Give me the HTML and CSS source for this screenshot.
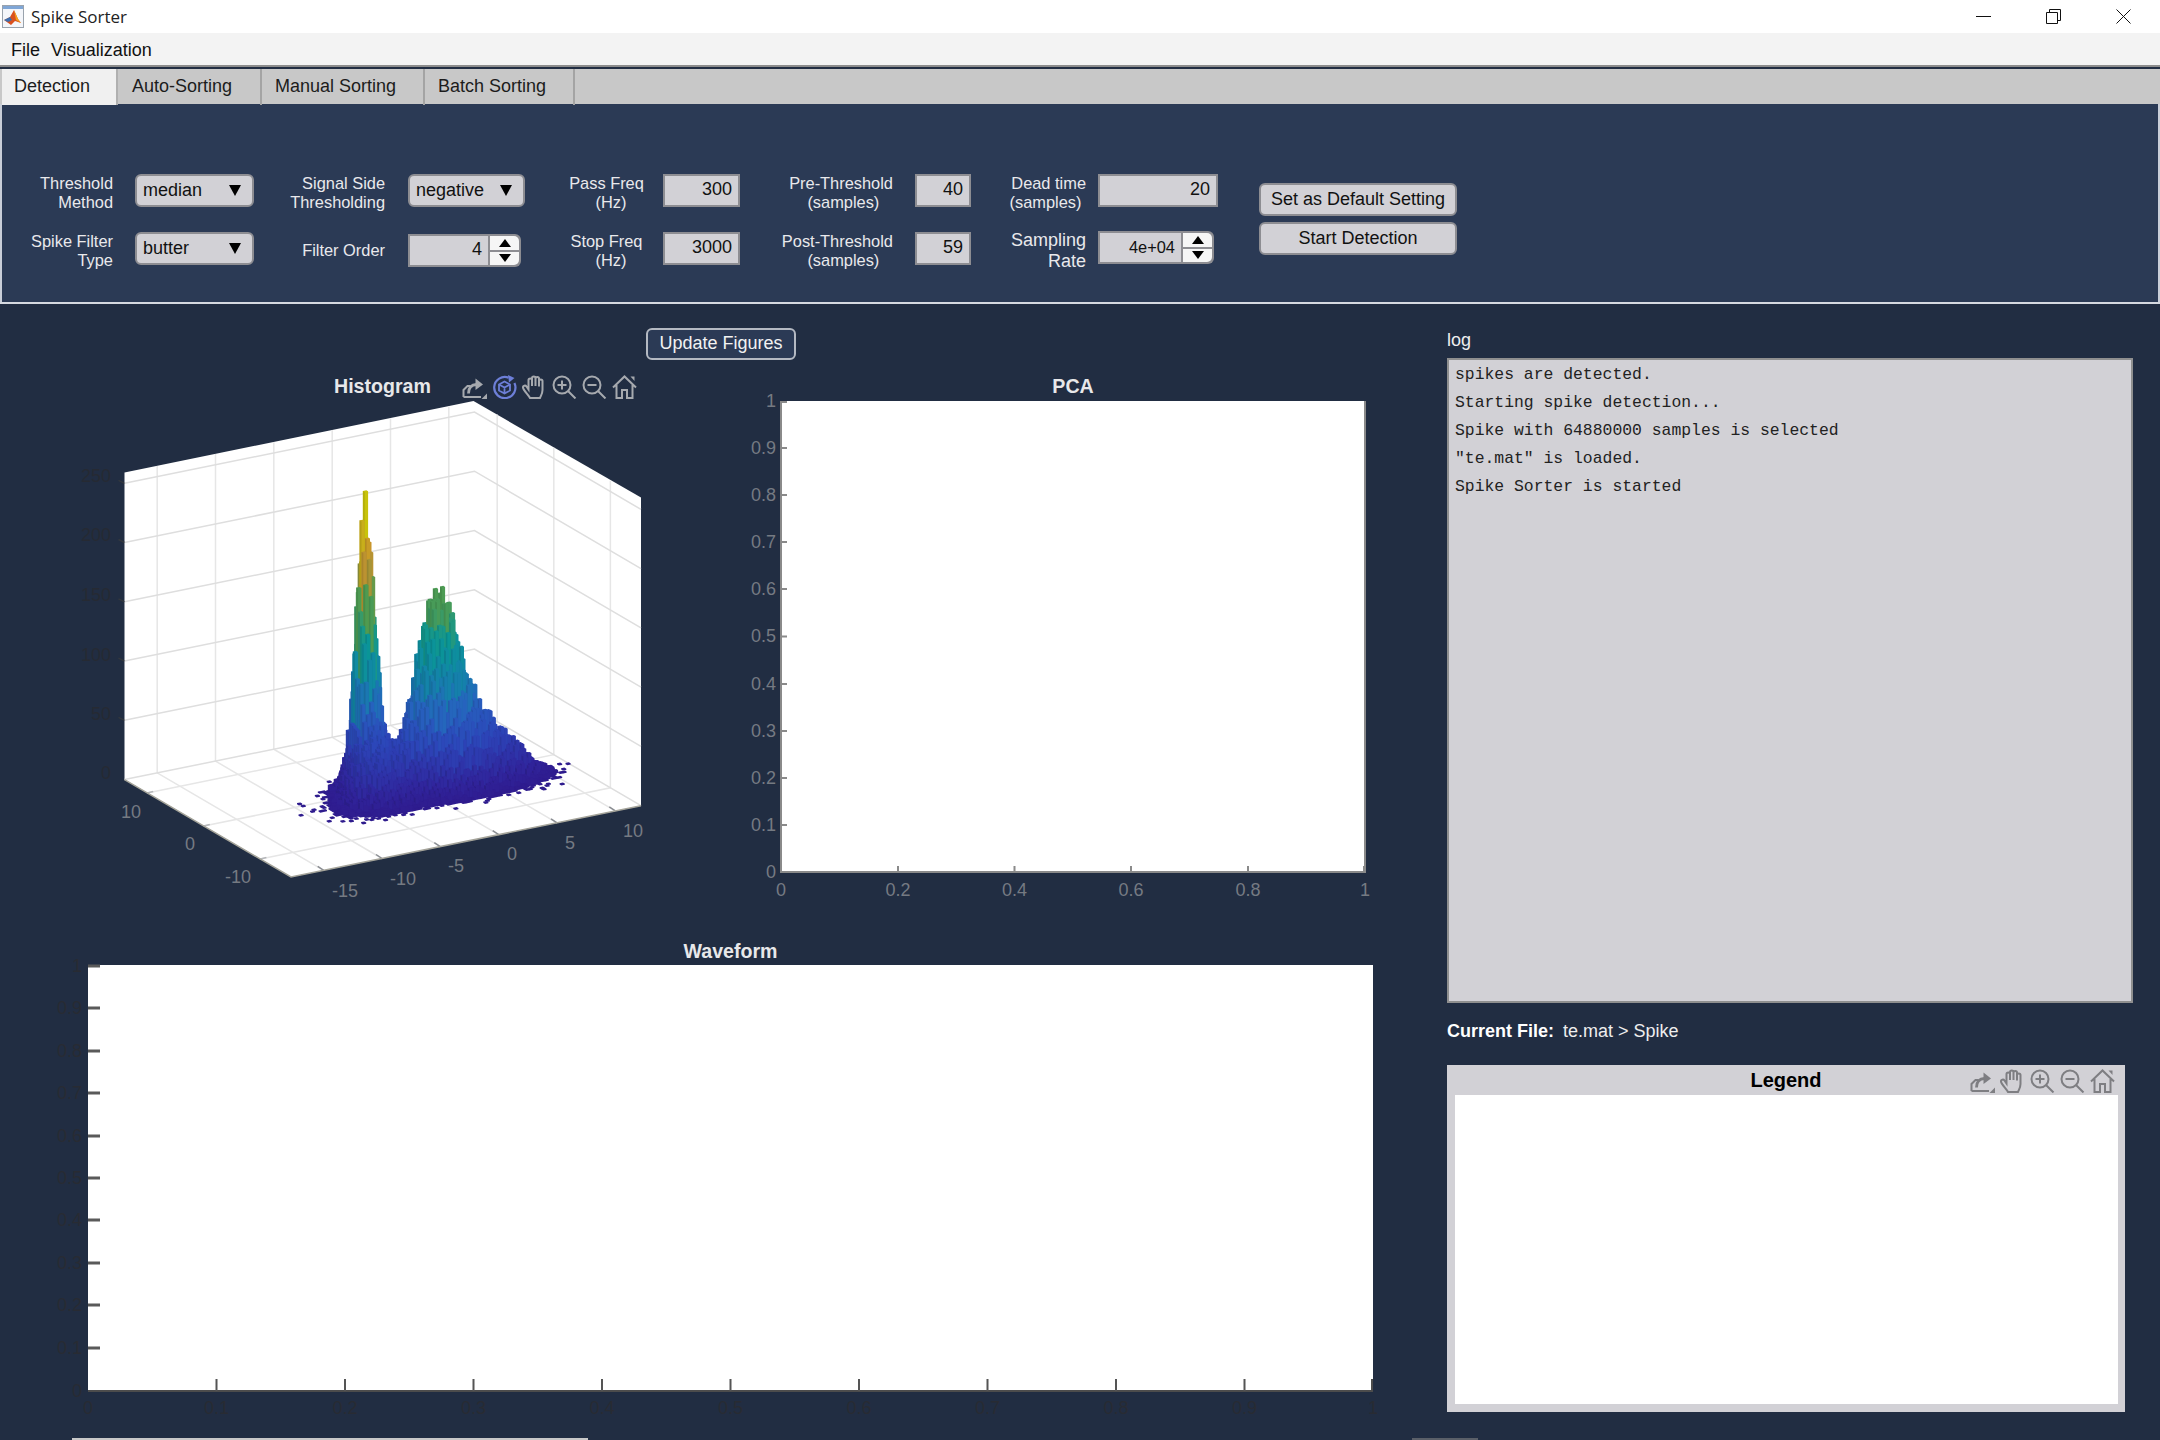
FILE: index.html
```html
<!DOCTYPE html>
<html lang="en">
<head>
    <meta charset="UTF-8">
    <title>Spike Sorter</title>
    <link rel="stylesheet" href="styles.css">
</head>
<body>

<svg class="icon-defs" width="0" height="0">
    <symbol id="ic-export" viewBox="0 0 25 24">
        <path d="M1.500 22V15L5.500 11H8.500M1.500 22H19" fill="none"/>
        <path d="M6.500 18.500C6.500 12.500 9.500 9.500 14.500 9.500" fill="none" stroke-width="2.800"/>
        <path d="M13.500 3.500L21 9.500L13.500 15Z" class="solid"/>
        <path d="M25 18.500V24H19.500Z" class="solid"/>
    </symbol>
    <symbol id="ic-rotate" viewBox="0 0 25 24">
        <path d="M16.500 2.600A10.600 10.600 0 1 0 22.400 8" fill="none" stroke-width="2.200"/>
        <path d="M16 0L22.500 3L17 7.500Z" class="solid"/>
        <path d="M12.500 6.500L18 9.500V15.500L12.500 18.500L7 15.500V9.500ZM7 9.500L12.500 12.500L18 9.500M12.500 12.500V18.500" fill="none" stroke-width="1.800"/>
    </symbol>
    <symbol id="ic-hand" viewBox="0 0 25 24">
        <path d="M8 23C6 19.500 1.500 15.500 1 12.500C0.800 10.500 3.500 10 4.500 11.500L6.500 14.500V5C6.500 3 10 3 10 5V11V3C10 1 13.500 1 13.500 3V11V3.500C13.500 1.500 17 1.500 17 3.500V11.500V6C17 4 20.500 4 20.500 6V15C20.500 18.500 19 20.500 18 23Z" fill="none"/>
    </symbol>
    <symbol id="ic-zoom-in" viewBox="0 0 25 24">
        <circle cx="10" cy="10" r="8.500" fill="none"/>
        <path d="M16 16L23.500 23.500M10 5.500V14.500M5.500 10H14.500" fill="none"/>
    </symbol>
    <symbol id="ic-zoom-out" viewBox="0 0 25 24">
        <circle cx="10" cy="10" r="8.500" fill="none"/>
        <path d="M16 16L23.500 23.500M5.500 10H14.500" fill="none"/>
    </symbol>
    <symbol id="ic-home" viewBox="0 0 25 24">
        <path d="M1 12.500L12.500 1.500L24 12.500M4.500 10V23H10V15H15V23H20.500V10" fill="none"/>
        <path d="M18.500 1.500H22.500V6Z" class="solid"/>
    </symbol>
</svg>

<!-- Title bar -->
<div class="titlebar">
    <svg class="app-icon" viewBox="0 0 22 23">
        <rect x="0.500" y="0.500" width="21" height="22" fill="#f4f6fa" stroke="#9aa3ad"/>
        <rect x="1" y="1" width="20" height="3" fill="#7fa6d6"/>
        <path d="M2 15L8 12L12 5L16 14L19 18L13 16L9 20Z" fill="#d9501e"/>
        <path d="M2 15L8 12L10 15L6 17Z" fill="#3c6fb0"/>
        <path d="M12 5L16 14L19 18L14 15Z" fill="#f4a01c"/>
    </svg>
    <span class="app-title">Spike Sorter</span>
    <div class="win-buttons">
        <svg class="win-btn" viewBox="0 0 15 15"><path d="M0 7.500H15"/></svg>
        <svg class="win-btn" viewBox="0 0 15 15"><path d="M0.500 3.500H11.500V14.500H0.500ZM3.500 3.500V0.500H14.500V11.500H11.500"/></svg>
        <svg class="win-btn" viewBox="0 0 15 15"><path d="M0.500 0.500L14.500 14.500M14.500 0.500L0.500 14.500"/></svg>
    </div>
</div>

<!-- Menu -->
<div class="menubar">
    <span>File</span>
    <span>Visualization</span>
</div>

<!-- Tabs -->
<div class="tabbar">
    <div class="tab tab-active tab-first">Detection</div>
    <div class="tab tab-auto">Auto-Sorting</div>
    <div class="tab tab-manual">Manual Sorting</div>
    <div class="tab tab-batch">Batch Sorting</div>
</div>

<!-- Detection settings -->
<div class="settings">
    <div class="lbl lbl-1">Threshold<br>Method</div>
    <div class="dropdown">median</div>
    <div class="lbl lbl-2">Signal Side<br>Thresholding</div>
    <div class="dropdown">negative</div>
    <div class="lbl lbl-3">Pass Freq<br>&nbsp;&nbsp;(Hz)</div>
    <div class="edit">300</div>
    <div class="lbl lbl-4">Pre-Threshold<br>(samples)&nbsp;&nbsp;&nbsp;</div>
    <div class="edit">40</div>
    <div class="lbl lbl-5">Dead time<br>(samples)&nbsp;</div>
    <div class="edit">20</div>

    <div class="lbl lbl-1">Spike Filter<br>Type</div>
    <div class="dropdown">butter</div>
    <div class="lbl lbl-2">Filter Order</div>
    <div class="spinner spinner-order">
        <div class="edit spin-value">4</div>
        <div class="spin-btns"><span class="spin-up"></span><span class="spin-down"></span></div>
    </div>
    <div class="lbl lbl-3">Stop Freq<br>&nbsp;&nbsp;(Hz)</div>
    <div class="edit">3000</div>
    <div class="lbl lbl-4">Post-Threshold<br>(samples)&nbsp;&nbsp;&nbsp;</div>
    <div class="edit">59</div>
    <div class="lbl lbl-5 lbl-big">Sampling<br>Rate</div>
    <div class="spinner spinner-rate">
        <div class="edit spin-value spin-small">4e+04</div>
        <div class="spin-btns"><span class="spin-up"></span><span class="spin-down"></span></div>
    </div>

    <div class="action-btns">
        <div class="btn">Set as Default Setting</div>
        <div class="btn">Start Detection</div>
    </div>
</div>

<div class="main">
    <div class="plots">
        <div class="btn-update">Update Figures</div>

        <div class="plots-top">
            <!-- Histogram -->
            <div class="hist">
                <div class="hist-head">
                    <span class="plot-title">Histogram</span>
                    <div class="toolbar toolbar-dark">
                        <svg class="tb-icon"><use href="#ic-export"/></svg>
                        <svg class="tb-icon tb-active"><use href="#ic-rotate"/></svg>
                        <svg class="tb-icon"><use href="#ic-hand"/></svg>
                        <svg class="tb-icon"><use href="#ic-zoom-in"/></svg>
                        <svg class="tb-icon"><use href="#ic-zoom-out"/></svg>
                        <svg class="tb-icon"><use href="#ic-home"/></svg>
                    </div>
                </div>
                <svg class="hist-svg" viewBox="0 401 700 519">
                    <polygon points="124.500,472.500 473.500,401 641,497.500 641,805.700 291,877 124.500,779.600" fill="#fff"/>
                    <g id="hist-grid"></g>
                    <g id="hist-bars"></g>
                    <g class="ax-dark" text-anchor="end">
                        <text x="111" y="482">250</text>
                        <text x="111" y="541">200</text>
                        <text x="111" y="601">150</text>
                        <text x="111" y="661">100</text>
                        <text x="111" y="720">50</text>
                        <text x="111" y="779">0</text>
                    </g>
                    <g class="ax-gray" text-anchor="middle">
                        <text x="345" y="897">-15</text>
                        <text x="403" y="885">-10</text>
                        <text x="456" y="872">-5</text>
                        <text x="512" y="860">0</text>
                        <text x="570" y="849">5</text>
                        <text x="633" y="837">10</text>
                        <text x="238" y="883">-10</text>
                        <text x="190" y="850">0</text>
                        <text x="131" y="818">10</text>
                    </g>
                </svg>
            </div>

            <!-- PCA -->
            <div class="pca">
                <div class="pca-head"><span class="plot-title">PCA</span></div>
                <svg class="pca-svg" viewBox="700 401 700 519">
                    <rect x="781" y="401" width="584" height="471" fill="#fff"/>
                    <path class="pca-axis" d="M781 401V872H1365V401"/>
                    <path class="pca-tick" d="M781 402h6M781 448h6M781 495h6M781 542h6M781 589h6M781 636.500h6M781 684h6M781 731h6M781 778h6M781 825h6M898 872v-6M1014.500 872v-6M1131 872v-6M1248 872v-6M1364 872v-6"/>
                    <g class="ax-gray" text-anchor="end">
                        <text x="776" y="407">1</text>
                        <text x="776" y="454">0.9</text>
                        <text x="776" y="501">0.8</text>
                        <text x="776" y="548">0.7</text>
                        <text x="776" y="595">0.6</text>
                        <text x="776" y="642">0.5</text>
                        <text x="776" y="690">0.4</text>
                        <text x="776" y="737">0.3</text>
                        <text x="776" y="784">0.2</text>
                        <text x="776" y="831">0.1</text>
                        <text x="776" y="878">0</text>
                    </g>
                    <g class="ax-gray" text-anchor="middle">
                        <text x="781" y="896">0</text>
                        <text x="898" y="896">0.2</text>
                        <text x="1014.500" y="896">0.4</text>
                        <text x="1131" y="896">0.6</text>
                        <text x="1248" y="896">0.8</text>
                        <text x="1365" y="896">1</text>
                    </g>
                </svg>
            </div>
        </div>

        <!-- Waveform -->
        <div class="wave">
            <div class="wave-head"><span class="plot-title">Waveform</span></div>
            <svg class="wave-svg" viewBox="0 966 1447 460">
                <rect x="88" y="966" width="1285" height="426" fill="#fff"/>
                <path class="wave-axis" d="M88 1392H1372V1380"/>
                <path class="wave-tick-y" d="M88 967h12M88 1009h12M88 1052h12M88 1094h12M88 1137h12M88 1179h12M88 1221h12M88 1264h12M88 1306h12M88 1349h12"/>
                <path class="wave-tick-x" d="M216.500 1392v-12M345 1392v-12M473.500 1392v-12M602 1392v-12M730.500 1392v-12M859 1392v-12M987.500 1392v-12M1116 1392v-12M1244.500 1392v-12"/>
                <g class="ax-hidden" text-anchor="end">
                    <text x="82" y="973">1</text>
                    <text x="82" y="1015">0.9</text>
                    <text x="82" y="1058">0.8</text>
                    <text x="82" y="1100">0.7</text>
                    <text x="82" y="1143">0.6</text>
                    <text x="82" y="1185">0.5</text>
                    <text x="82" y="1227">0.4</text>
                    <text x="82" y="1270">0.3</text>
                    <text x="82" y="1312">0.2</text>
                    <text x="82" y="1355">0.1</text>
                    <text x="82" y="1398">0</text>
                </g>
                <g class="ax-hidden" text-anchor="middle">
                    <text x="88" y="1415">0</text>
                    <text x="216.500" y="1415">0.1</text>
                    <text x="345" y="1415">0.2</text>
                    <text x="473.500" y="1415">0.3</text>
                    <text x="602" y="1415">0.4</text>
                    <text x="730.500" y="1415">0.5</text>
                    <text x="859" y="1415">0.6</text>
                    <text x="987.500" y="1415">0.7</text>
                    <text x="1116" y="1415">0.8</text>
                    <text x="1244.500" y="1415">0.9</text>
                    <text x="1373" y="1415">1</text>
                </g>
            </svg>
        </div>
    </div>

    <div class="side">
        <div class="log-label">log</div>
        <div class="log-box">
            <div>spikes are detected.</div>
            <div>Starting spike detection...</div>
            <div>Spike with 64880000 samples is selected</div>
            <div>"te.mat" is loaded.</div>
            <div>Spike Sorter is started</div>
        </div>
        <div class="current-file"><b>Current File:</b><span>te.mat &gt; Spike</span></div>
        <div class="legend">
            <div class="legend-head">Legend</div>
            <div class="toolbar toolbar-legend">
                <svg class="tb-icon"><use href="#ic-export"/></svg>
                <svg class="tb-icon"><use href="#ic-hand"/></svg>
                <svg class="tb-icon"><use href="#ic-zoom-in"/></svg>
                <svg class="tb-icon"><use href="#ic-zoom-out"/></svg>
                <svg class="tb-icon"><use href="#ic-home"/></svg>
            </div>
            <div class="legend-body"></div>
        </div>
    </div>
</div>

<div class="scroll-thumb scroll-left"></div>
<div class="scroll-thumb scroll-right"></div>

<script src="hist.js"></script>
</body>
</html>
```

FILE: styles.css
```css
body {
    margin: 0;
    height: 1440px;
    overflow: hidden;
    position: relative;
    background-color: #212d42;
    font-family: "Liberation Sans", Arial, sans-serif;
    font-size: 18px;
}

.icon-defs {
    position: absolute;
}

.solid {
    fill: currentColor;
    stroke: none;
}

/* Title bar */
.titlebar {
    height: 33px;
    background-color: #fff;
    display: flex;
    align-items: center;
}
.app-icon {
    width: 22px;
    height: 23px;
    margin-left: 2px;
}
.app-title {
    margin-left: 7px;
    font-family: "Open Sans", sans-serif;
    font-size: 17px;
    color: #222;
}
.win-buttons {
    margin-left: auto;
    display: flex;
    gap: 55px;
    padding-right: 29px;
}
.win-btn {
    width: 15px;
    height: 15px;
    fill: none;
    stroke: #111;
    stroke-width: 1;
}

/* Menu */
.menubar {
    box-sizing: border-box;
    height: 32px;
    padding: 2px 0 0 11px;
    background-color: #f3f3f3;
    display: flex;
    align-items: center;
    gap: 11px;
    color: #111;
}

/* Tabs */
.tabbar {
    height: 36px;
    border-top: 2px solid #8c8c8c;
    box-shadow: inset 0 2px 0 #212d42;
    padding-top: 2px;
    background-color: #c8c8c8;
    display: flex;
    color: #1c1c1c;
}
.tab {
    box-sizing: border-box;
    padding-top: 7px;
    border-right: 2px solid #a4a4a4;
}
.tab-first {
    width: 116px;
    margin-left: 2px;
    padding-left: 12px;
}
.tab-active {
    background-color: #f0f0f0;
    border-right-color: #b0b0b0;
}
.tab-auto {
    width: 144px;
    padding-left: 14px;
}
.tab-manual {
    width: 163px;
    padding-left: 13px;
}
.tab-batch {
    width: 150px;
    padding-left: 13px;
}

/* Detection settings */
.settings {
    box-sizing: border-box;
    height: 200px;
    margin-top: -1px;
    padding: 70px 0 0 2px;
    background-color: #2b3a55;
    border-bottom: 2px solid #d5d9e0;
    box-shadow: inset 2px 0 0 #c9ced8, inset -2px 0 0 #c9ced8;
    display: grid;
    grid-template-columns: 133px 119px 154px 117px 138px 77px 175px 56px 127px 120px 239px;
    grid-template-rows: 33px 33px;
    row-gap: 25px;
    color: #e9e9ec;
}
.lbl {
    box-sizing: border-box;
    font-size: 16.4px;
    line-height: 19px;
    padding-top: 4px;
    height: 33px;
    display: flex;
    flex-direction: column;
    justify-content: center;
    text-align: right;
    white-space: nowrap;
}
.lbl-1 {
    padding-right: 22px;
}
.lbl-2 {
    padding-right: 23px;
}
.lbl-3 {
    padding-right: 18px;
    padding-left: 43px;
    text-align: center;
}
.lbl-4 {
    padding-right: 22px;
}
.lbl-5 {
    padding-right: 12px;
}
.lbl-big {
    font-size: 18px;
    line-height: 21px;
}

.dropdown,
.edit,
.btn {
    box-sizing: border-box;
    height: 33px;
    background-color: #d2d1d6;
    color: #111;
    border: 2px solid #8d8d92;
}
.dropdown {
    position: relative;
    border-radius: 6px;
    padding: 4px 0 0 6px;
}
.dropdown::after {
    content: "";
    position: absolute;
    right: 11px;
    top: 9px;
    border-left: 6px solid transparent;
    border-right: 6px solid transparent;
    border-top: 11px solid #000;
}
.edit {
    text-align: right;
    padding: 3px 6px 0 0;
}
.spinner {
    display: flex;
    height: 33px;
}
.spinner-order {
    width: 113px;
    margin-top: 2px;
}
.spinner-rate {
    width: 116px;
    margin-top: -1px;
}
.spin-value {
    flex: 1;
}
.spin-small {
    font-size: 16.4px;
    padding-top: 5px;
}
.spin-btns {
    width: 31px;
    background-color: #8d8d92;
    border-radius: 0 6px 6px 0;
    padding: 2px 2px 2px 0;
    box-sizing: border-box;
    display: flex;
    flex-direction: column;
    gap: 2px;
}
.spin-up,
.spin-down {
    flex: 1;
    background-color: #f6f6f6;
    display: flex;
    align-items: center;
    justify-content: center;
}
.spin-up {
    border-top-right-radius: 5px;
}
.spin-down {
    border-bottom-right-radius: 5px;
}
.spin-up::after {
    content: "";
    border-left: 6px solid transparent;
    border-right: 6px solid transparent;
    border-bottom: 8px solid #000;
}
.spin-down::after {
    content: "";
    border-left: 6px solid transparent;
    border-right: 6px solid transparent;
    border-top: 8px solid #000;
}

.action-btns {
    grid-column: 11;
    grid-row: 1 / 3;
    padding: 9px 0 0 41px;
    display: flex;
    flex-direction: column;
    gap: 6px;
}
.btn {
    border-radius: 6px;
    text-align: center;
    padding-top: 4px;
}

/* Lower part */
.main {
    display: flex;
}
.plots {
    width: 1447px;
    flex-shrink: 0;
}
.btn-update {
    box-sizing: border-box;
    width: 150px;
    height: 32px;
    margin: 24px 0 0 646px;
    padding-top: 3px;
    text-align: center;
    color: #f2f2f2;
    background-color: #2b3a55;
    border: 2px solid #b4b9c2;
    border-radius: 6px;
}
.plots-top {
    margin-top: 12px;
    display: flex;
}
.plot-title {
    font-weight: bold;
    font-size: 19.6px;
    color: #e8e8ea;
}
.hist {
    width: 700px;
}
.hist-head {
    height: 29px;
    padding-left: 334px;
    display: flex;
    align-items: center;
    gap: 31px;
}
.hist-svg,
.pca-svg {
    display: block;
    width: 700px;
    height: 519px;
    overflow: visible;
}
.pca {
    width: 700px;
}
.pca-head {
    height: 29px;
    margin-left: 81px;
    width: 584px;
    display: flex;
    align-items: center;
    justify-content: center;
}
.wave {
    margin-top: 17px;
}
.wave-head {
    height: 28px;
    margin-left: 88px;
    width: 1285px;
    display: flex;
    align-items: center;
    justify-content: center;
}
.wave-svg {
    display: block;
    width: 1447px;
    height: 460px;
    overflow: visible;
}

/* Axes */
.ax-dark,
.ax-gray,
.ax-hidden {
    font-size: 18px;
    font-family: "Liberation Sans", Arial, sans-serif;
}
.ax-dark {
    fill: #262a33;
}
.ax-gray {
    fill: #757a82;
}
.ax-hidden {
    fill: #282b33;
}
.pca-axis,
.pca-tick {
    fill: none;
    stroke: #8a8a8a;
    stroke-width: 2;
}
.wave-axis {
    fill: none;
    stroke: #4c4c4c;
    stroke-width: 2;
}
.wave-tick-y {
    fill: none;
    stroke: #5a5a5a;
    stroke-width: 3;
}
.wave-tick-x {
    fill: none;
    stroke: #555;
    stroke-width: 2;
}

/* Plot toolbars */
.toolbar {
    display: flex;
    gap: 5px;
}
.tb-icon {
    width: 25px;
    height: 24px;
    stroke: currentColor;
    stroke-width: 2;
}
.toolbar-dark {
    color: #a6a9ae;
}
.tb-active {
    color: #6d7fd8;
}
.toolbar-legend {
    position: absolute;
    top: 4px;
    right: 10px;
    color: #7e7e82;
}

/* Right column */
.side {
    width: 686px;
    padding-top: 26px;
}
.log-label {
    line-height: 21px;
    color: #eee;
}
.log-box {
    box-sizing: border-box;
    height: 645px;
    margin-top: 7px;
    padding: 1px 0 0 6px;
    background-color: #d2d1d6;
    border: 2px solid #8f8f8f;
    font-family: "Liberation Mono", monospace;
    font-size: 16.4px;
    line-height: 28px;
    color: #222;
}
.current-file {
    margin-top: 18px;
    line-height: 21px;
    color: #eee;
}
.current-file b {
    margin-right: 9px;
    color: #fff;
}
.legend {
    position: relative;
    width: 678px;
    height: 347px;
    margin-top: 23px;
    background-color: #d2d1d6;
}
.legend-head {
    height: 30px;
    line-height: 31px;
    text-align: center;
    font-weight: bold;
    font-size: 20px;
    color: #000;
}
.legend-body {
    height: 309px;
    margin: 0 7px 0 8px;
    background-color: #fff;
}

/* Scrollbar slivers at the window edge */
.scroll-thumb {
    position: absolute;
    bottom: 0;
    height: 2px;
}
.scroll-left {
    left: 72px;
    width: 516px;
    background-color: #c8c8c8;
}
.scroll-right {
    left: 1412px;
    width: 66px;
    background-color: #5a5f68;
}
```

FILE: hist.js
```js
// projection of the 3d axes: u, v and w run from 0 to 1 along each edge
const front = [291, 877];
const edgeU = [350, -71.3];
const edgeV = [-166.5, -97.4];
const boxH = 307;
const NS = 'http://www.w3.org/2000/svg';

const project = (u, v, w) => [
    front[0] + u * edgeU[0] + v * edgeV[0],
    front[1] + u * edgeU[1] + v * edgeV[1] - w * boxH
];
const pts = list => list.map(p => p[0].toFixed(1) + ' ' + p[1].toFixed(1)).join('L');

const addPath = (parent, d, fill, stroke, width) => {
    const el = document.createElementNS(NS, 'path');
    el.setAttribute('d', d);
    el.setAttribute('fill', fill || 'none');
    if (stroke) {
        el.setAttribute('stroke', stroke);
        el.setAttribute('stroke-width', width);
    }
    parent.appendChild(el);
};

// grid lines on the floor and the two back walls
const grid = document.getElementById('hist-grid');
const xTicks = [-15, -10, -5, 0, 5, 10].map(x => (x + 17.8) / 30);
const yTicks = [-10, 0, 10].map(y => (y + 15.4) / 29.4);
const zTicks = [50, 100, 150, 200, 250].map(z => z / 259);
const gridColor = '#e6e6e6';

xTicks.forEach(u => {
    addPath(grid, 'M' + pts([project(u, 0, 0), project(u, 1, 0), project(u, 1, 1)]), null, gridColor, 1.5);
});
yTicks.forEach(v => {
    addPath(grid, 'M' + pts([project(0, v, 0), project(1, v, 0), project(1, v, 1)]), null, gridColor, 1.5);
});
zTicks.concat([0]).forEach(w => {
    addPath(grid, 'M' + pts([project(0, 1, w), project(1, 1, w), project(1, 0, w)]), null, '#dedede', 1.5);
});

// outer ticks and box edges
xTicks.forEach(u => {
    const a = project(u, 0, 0);
    addPath(grid, 'M' + pts([a, [a[0] - 6, a[1] - 4]]), null, '#8a8d92', 1.5);
});
yTicks.forEach(v => {
    const a = project(0, v, 0);
    addPath(grid, 'M' + pts([a, [a[0] + 6, a[1] - 1.5]]), null, '#b5b7ba', 1.5);
});
zTicks.forEach(w => {
    const a = project(0, 1, w);
    addPath(grid, 'M' + pts([a, [a[0] - 6, a[1] - 3]]), null, '#33383f', 1.5);
});
addPath(grid, 'M' + pts([project(0, 1, 0), project(0, 0, 0), project(1, 0, 0)]), null, '#a5a49a', 1.5);

// bar colours, low to high
const stops = [
    [0, 46, 26, 140], [0.06, 48, 36, 155], [0.2, 44, 70, 185], [0.32, 38, 100, 190],
    [0.42, 20, 130, 170], [0.55, 10, 150, 150], [0.64, 70, 155, 90], [0.72, 80, 155, 80],
    [0.78, 150, 150, 60], [0.84, 200, 145, 45], [0.92, 200, 170, 30], [1, 200, 195, 10]
];
const colorOf = (t, shade) => {
    let i = 0;
    while (i < stops.length - 2 && t > stops[i + 1][0]) i++;
    const a = stops[i], b = stops[i + 1];
    const k = Math.min(1, (t - a[0]) / (b[0] - a[0]));
    const c = [1, 2, 3].map(n => Math.round((a[n] + (b[n] - a[n]) * k) * shade));
    return 'rgb(' + c.join(',') + ')';
};

// two spike clusters: [height, centre u, centre v, sigma u, sigma v]
const blobs = [
    [214, 0.486, 0.578, 0.021, 0.03],
    [40, 0.47, 0.52, 0.045, 0.05],
    [141, 0.635, 0.47, 0.052, 0.06],
    [46, 0.735, 0.42, 0.075, 0.05],
    [9, 0.84, 0.39, 0.05, 0.03],
    [22, 0.46, 0.42, 0.06, 0.05],
    [8, 0.43, 0.42, 0.05, 0.05],
    [8, 0.6, 0.42, 0.12, 0.05]
];
const density = (u, v) => blobs.reduce((sum, b) => {
    const du = (u - b[1]) / b[3], dv = (v - b[2]) / b[4];
    return sum + b[0] * Math.exp(-0.5 * (du * du + dv * dv));
}, 0);

let seed = 20240;
const rand = () => {
    seed = (seed * 1664525 + 1013904223) % 4294967296;
    return seed / 4294967296;
};

const bars = document.getElementById('hist-bars');
const stepU = 1 / 105, stepV = 1 / 90;

for (let iu = 104; iu >= 0; iu--) {
    for (let iv = 89; iv >= 0; iv--) {
        const u = iu * stepU, v = iv * stepV;
        const d = density(u, v);
        let z = 0;
        if (d > 2.5) {
            z = d + (rand() - 0.5) * 2 * Math.sqrt(d) * 1.1;
        } else if (rand() < d * 0.18) {
            z = 1;
        }
        if (z < 1) continue;
        const w = z / 259;
        const t = Math.min(1, z / 240);
        const a0 = project(u, v, 0), b0 = project(u + stepU, v, 0), c0 = project(u, v + stepV, 0);
        const a1 = project(u, v, w), b1 = project(u + stepU, v, w), c1 = project(u, v + stepV, w);
        const d1 = project(u + stepU, v + stepV, w);
        addPath(bars, 'M' + pts([c0, a0, b0, b1, d1, c1]) + 'Z', colorOf(t, 1));
        if (z > 8) {
            addPath(bars, 'M' + pts([c0, a0, a1, c1]) + 'Z', colorOf(t, 0.9));
        }
    }
}
```
